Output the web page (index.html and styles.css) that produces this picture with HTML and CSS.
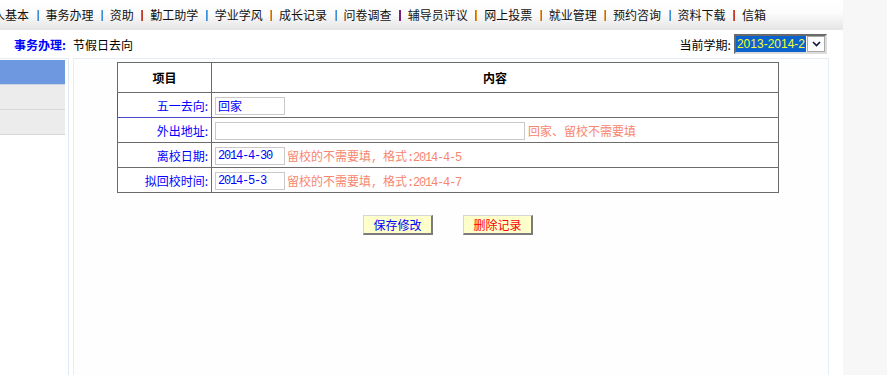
FILE: index.html
```html
<!DOCTYPE html>
<html lang="zh-CN">
<head>
<meta charset="utf-8">
<title>事务办理 - 节假日去向</title>
<link rel="stylesheet" href="styles.css">
</head>
<body>
<div class="page">
  <div class="nav">
    <ul class="nav-list">
      <li class="nav-item">个人基本</li><li class="sep sep-blue"></li>
      <li class="nav-item">事务办理</li><li class="sep sep-blue"></li>
      <li class="nav-item">资助</li><li class="sep sep-red"></li>
      <li class="nav-item">勤工助学</li><li class="sep sep-orange"></li>
      <li class="nav-item">学业学风</li><li class="sep sep-blue"></li>
      <li class="nav-item">成长记录</li><li class="sep sep-blue"></li>
      <li class="nav-item">问卷调查</li><li class="sep sep-purple"></li>
      <li class="nav-item">辅导员评议</li><li class="sep sep-orange"></li>
      <li class="nav-item">网上投票</li><li class="sep sep-blue"></li>
      <li class="nav-item">就业管理</li><li class="sep sep-blue"></li>
      <li class="nav-item">预约咨询</li><li class="sep sep-blue"></li>
      <li class="nav-item">资料下载</li><li class="sep sep-red"></li>
      <li class="nav-item">信箱</li>
    </ul>
  </div>

  <div class="crumb">
    <div class="crumb-left"><span class="crumb-title">事务办理:</span><span class="crumb-sub">节假日去向</span></div>
    <div class="crumb-right">
      <span class="term-label">当前学期:</span>
      <div class="select">
        <span class="select-value">2013-2014-2</span>
        <span class="select-btn"><svg width="9" height="6" viewBox="0 0 9 6"><path d="M1 1 L4.5 4.5 L8 1" fill="none" stroke="#10183a" stroke-width="1.6"/></svg></span>
      </div>
    </div>
  </div>

  <div class="main">
    <div class="sidebar">
      <div class="side-item active"></div>
      <div class="side-item"></div>
      <div class="side-item"></div>
    </div>
    <div class="panel">
      <div class="form-wrap">
        <table class="form-table">
          <tr>
            <th class="c1">项目</th>
            <th class="c2">内容</th>
          </tr>
          <tr>
            <td class="label hl">五一去向:</td>
            <td class="val"><input class="txt short" type="text" value="回家"></td>
          </tr>
          <tr>
            <td class="label">外出地址:</td>
            <td class="val"><input class="txt long" type="text" value=""><span class="hint">回家、留校不需要填</span></td>
          </tr>
          <tr>
            <td class="label">离校日期:</td>
            <td class="val"><input class="txt short mono" type="text" value="2014-4-30"><span class="hint near">留校的不需要填<span class="mono-t">, </span>格式<span class="mono-t">:2014-4-5</span></span></td>
          </tr>
          <tr>
            <td class="label">拟回校时间:</td>
            <td class="val"><input class="txt short mono" type="text" value="2014-5-3"><span class="hint near">留校的不需要填<span class="mono-t">, </span>格式<span class="mono-t">:2014-4-7</span></span></td>
          </tr>
        </table>
        <div class="actions">
          <button class="btn btn-save" type="button">保存修改</button>
          <button class="btn btn-del" type="button">删除记录</button>
        </div>
      </div>
    </div>
  </div>
</div>
</body>
</html>
```

FILE: styles.css
```css
html, body {
  margin: 0;
  padding: 0;
  height: 100%;
}
body {
  background: #f7f7f7;
  font-family: "Noto Sans CJK SC", "Noto Sans", sans-serif;
  font-size: 12px;
  color: #000;
  overflow: hidden;
}
.page {
  width: 843px;
  height: 100%;
  background: #fff;
  display: flex;
  flex-direction: column;
}

/* top navigation */
.nav {
  height: 30px;
  flex: none;
  background: linear-gradient(to bottom, #ffffff 0%, #fcfcfc 45%, #e4e4e4 100%);
  overflow: hidden;
}
.nav-list {
  list-style: none;
  margin: 0 0 0 -19px;
  padding: 0;
  height: 30px;
  display: flex;
  align-items: center;
  white-space: nowrap;
}
.nav-item {
  font-size: 12px;
  line-height: 30px;
  color: #111;
}
.sep {
  width: 2px;
  height: 11px;
  margin: 0 6.8px 0 7.6px;
}
.sep-blue { background: linear-gradient(to right, #e8a24a 0 35%, #3a8fd8 35%); }
.sep-red { background: linear-gradient(to right, #3a8fd8 0 30%, #c0392b 30%); }
.sep-orange { background: linear-gradient(to right, #3a8fd8 0 30%, #ea9420 30%); }
.sep-purple { background: #7a1f7e; }

/* breadcrumb row */
.crumb {
  height: 28px;
  flex: none;
  display: flex;
  align-items: center;
  justify-content: space-between;
  padding: 0 16px 0 14px;
}
.crumb-title {
  color: #0000ff;
  font-weight: bold;
}
.crumb-sub {
  margin-left: 7px;
  color: #000;
}
.crumb-right {
  display: flex;
  align-items: center;
}
.term-label {
  margin-right: 3px;
}
.select {
  display: flex;
  align-items: stretch;
  height: 16px;
  border-style: solid;
  border-width: 2px;
  border-color: #6a6a6a #dcdcdc #dcdcdc #6a6a6a;
  background: #fff;
}
.select-value {
  background: #0a62cc;
  color: #f6ff2a;
  font-family: "Liberation Sans", Arial, sans-serif;
  font-size: 12px;
  line-height: 16px;
  padding: 0 1px 0 1px;
  white-space: nowrap;
}
.select-btn {
  width: 18px;
  margin-left: 1px;
  box-sizing: border-box;
  border: 1px solid #a8a8a8;
  background: #fdfdfd;
  display: flex;
  align-items: center;
  justify-content: center;
}

/* main area */
.main {
  flex: 1;
  display: flex;
  align-items: stretch;
}
.sidebar {
  width: 65px;
  padding: 1px 3px 0 0;
  border-top: 1px solid #e6edf5;
  border-right: 1px solid #e0e9f3;
}
.side-item {
  height: 24px;
  background: #ececec;
  border-bottom: 1px solid #d8d8d8;
}
.side-item.active {
  background: #6e99e1;
  border-bottom-color: #c9d4e6;
}
.panel {
  width: 754px;
  margin-left: 4px;
  border: 1px solid #e6edf5;
  border-bottom: none;
  background: #fefefe;
}
.form-wrap {
  width: 662px;
  margin: 3px 0 0 43px;
}

/* form table */
.form-table {
  width: 662px;
  border-collapse: collapse;
  background: #fff;
}
.form-table th,
.form-table td {
  border: 1px solid #6b6b6b;
  padding: 0;
}
.form-table th {
  height: 29px;
  font-weight: bold;
  text-align: center;
  font-size: 12px;
}
.form-table th.c1 {
  width: 93px;
}
.form-table td {
  height: 24px;
}
.form-table td.label {
  text-align: right;
  color: #0000ff;
  padding-right: 3px;
}
.form-table td.hl {
  border-left-color: #4d4dd2;
  border-bottom-color: #4d4dd2;
}
.form-table td.val {
  padding-left: 3px;
  white-space: nowrap;
}
.txt {
  box-sizing: border-box;
  height: 18px;
  border: 1px solid #c9c9c9;
  padding: 0 2px;
  margin: 0;
  font-family: "Noto Sans CJK SC", "Noto Sans", sans-serif;
  font-size: 12px;
  color: #0000ff;
  vertical-align: middle;
  background: #fff;
  outline: none;
}
.txt.short { width: 70px; }
.txt.long { width: 310px; }
.txt.mono {
  font-family: "Liberation Mono", monospace;
  letter-spacing: -1.2px;
}
.hint {
  color: #f7866f;
  margin-left: 3px;
  vertical-align: middle;
}
.hint.near { margin-left: 2px; }
.mono-t {
  font-family: "Liberation Mono", monospace;
  letter-spacing: -1.2px;
}

/* buttons */
.actions {
  display: flex;
  justify-content: center;
  gap: 30px;
  margin-top: 22px;
}
.btn {
  width: 70px;
  height: 20px;
  box-sizing: border-box;
  padding: 0;
  margin: 0;
  background: #ffffcc;
  border-style: solid;
  border-width: 1px 2px 2px 1px;
  border-color: #d6d6d6 #7b7b7b #7b7b7b #d6d6d6;
  font-family: "Noto Sans CJK SC", "Noto Sans", sans-serif;
  font-size: 12px;
  line-height: 16px;
}
.btn-save { color: #0000ff; }
.btn-del { color: #ff0000; }
```
